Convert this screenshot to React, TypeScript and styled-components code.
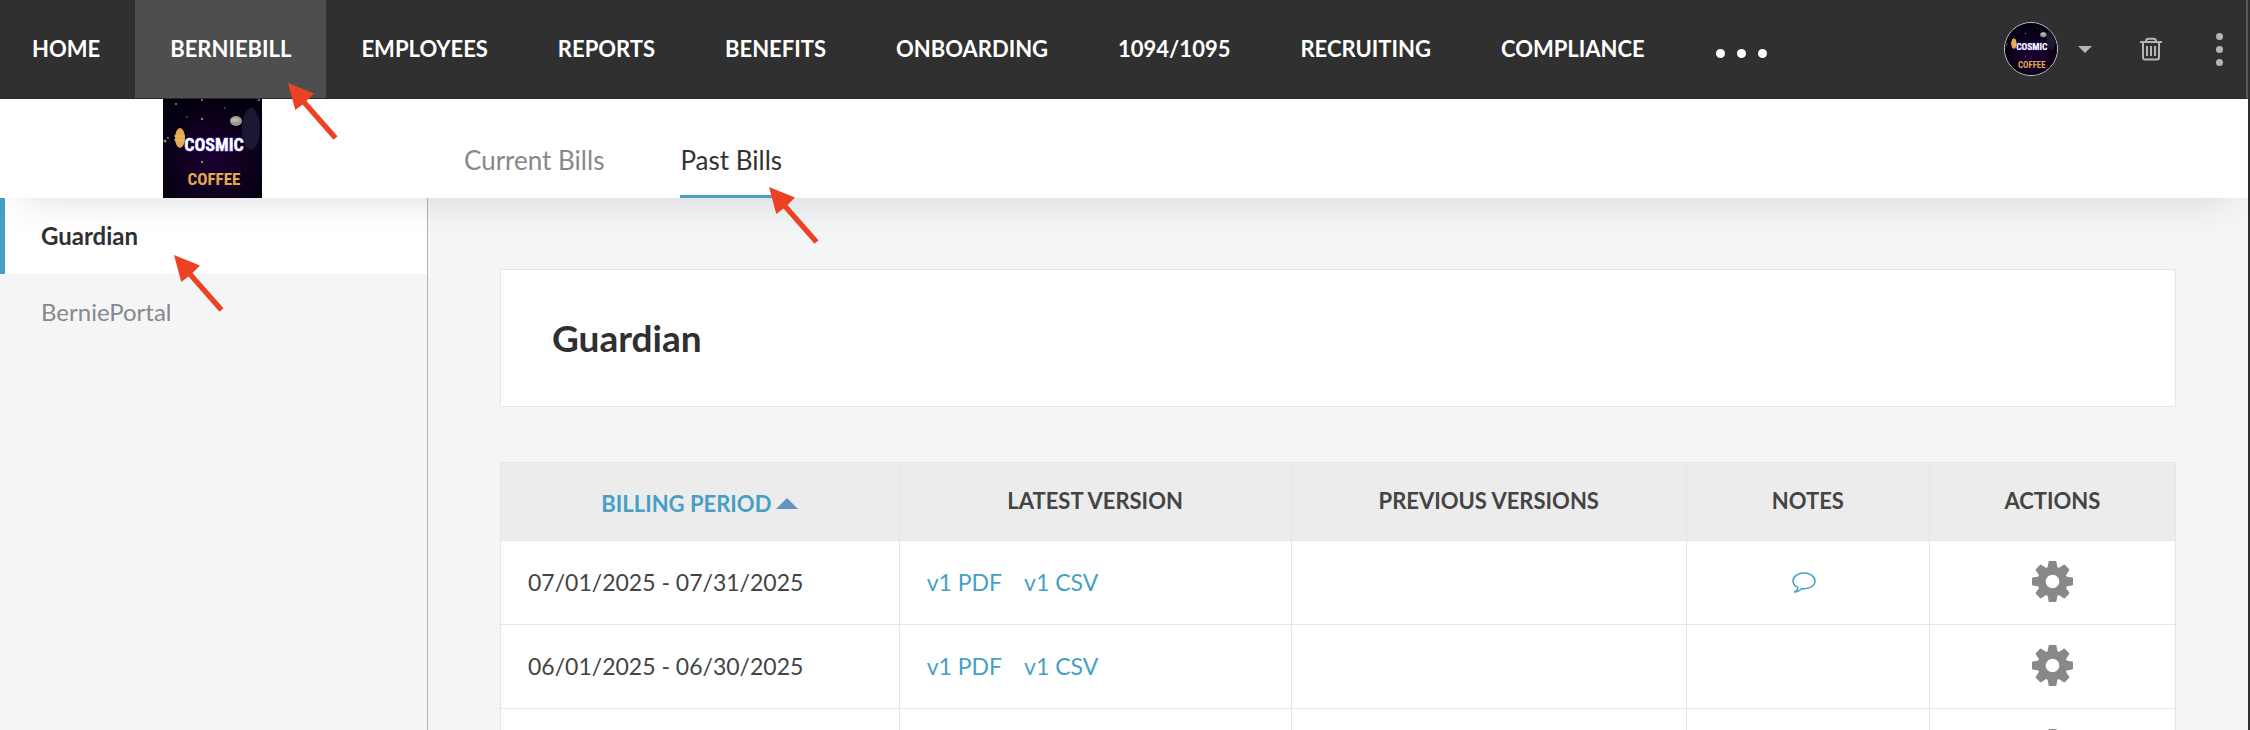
import React from "react";
import styled, { createGlobalStyle } from "styled-components";

const blue = "#469fc5";
const line = "#e4e5e7";

const GlobalStyle = createGlobalStyle`
  * { box-sizing: border-box; }
  html, body { margin: 0; height: 100%; overflow: hidden; }
  #root { height: 100%; }
  body {
    background: #f4f5f7;
    color: #444;
    font-family: Lato, "Liberation Sans", sans-serif;
    font-size: 24px;
    line-height: 28px;
  }
  a { text-decoration: none; }
  button { border: 0; padding: 0; background: none; cursor: pointer; font: inherit; }
`;

const Page = styled.div`
  display: flex;
  flex-direction: column;
  height: 100%;
  border-right: 2px solid #2f2f2f;
`;

const NavBar = styled.nav`
  position: relative;
  z-index: 3;
  display: flex;
  flex: none;
  height: 99px;
  background: #303030;
  border-bottom: 1px solid #282828;
  border-right: 2px solid #585858;
`;

const NavLink = styled.a<{ $active?: boolean }>`
  position: relative;
  display: flex;
  align-items: center;
  padding: 0 35px;
  color: #fff;
  background: ${(p) => (p.$active ? "#4e4e4e" : "transparent")};
  font-size: 22px;
  font-weight: 700;
  &:first-child { padding-left: 32px; }
`;

const MoreButton = styled.button`
  display: flex;
  align-items: center;
  gap: 12px;
  margin-left: 36px;
  padding-top: 8px;
`;

const MoreDot = styled.span`
  width: 9px;
  height: 9px;
  border-radius: 50%;
  background: #fff;
`;

const NavTools = styled.div`
  display: flex;
  align-items: center;
  margin-left: auto;
  padding-right: 23px;
  color: #b5b5b5;
`;

const AccountButton = styled.button`
  display: flex;
  align-items: center;
  gap: 20px;
  margin-right: 48px;
  color: inherit;
`;

const Avatar = styled.span`
  display: block;
  width: 54px;
  height: 54px;
  overflow: hidden;
  border: 1px solid #c9c9c9;
  border-radius: 50%;
`;

const IconButton = styled.button`
  display: flex;
  color: inherit;
`;

const KebabButton = styled(IconButton)`
  flex-direction: column;
  gap: 6px;
  margin-left: 54px;
`;

const KebabDot = styled.span`
  width: 7px;
  height: 7px;
  border-radius: 50%;
  background: #b5b5b5;
`;

const SubHeader = styled.header`
  position: relative;
  z-index: 2;
  display: flex;
  flex: none;
  height: 99px;
  background: #fff;
  box-shadow: 0 20px 40px -20px rgba(0, 0, 0, 0.14);
`;

const Brand = styled.div`
  display: flex;
  justify-content: center;
  width: 425px;
`;

const Tabs = styled.div`
  display: flex;
  gap: 76px;
  margin-left: 39px;
`;

const Tab = styled.a<{ $active?: boolean }>`
  position: relative;
  padding-top: 47px;
  color: ${(p) => (p.$active ? "#333" : "#888")};
  border-bottom: 3px solid ${(p) => (p.$active ? blue : "transparent")};
  font-size: 26px;
`;

const Body = styled.div`
  display: flex;
  flex: 1;
  min-height: 0;
`;

const Sidebar = styled.aside`
  display: flex;
  flex-direction: column;
  flex: none;
  width: 428px;
  border-right: 1px solid #b4b5b7;
`;

const SideLink = styled.a<{ $active?: boolean }>`
  position: relative;
  padding: 24px 36px;
  color: ${(p) => (p.$active ? "#303030" : "#888")};
  background: ${(p) => (p.$active ? "#fff" : "transparent")};
  border-left: 5px solid ${(p) => (p.$active ? blue : "transparent")};
  font-weight: ${(p) => (p.$active ? 700 : 400)};
`;

const Main = styled.main`
  flex: 1;
  min-width: 0;
  overflow: hidden;
  padding: 71px 72px 0;
`;

const TitleCard = styled.section`
  padding: 48px 51px;
  background: #fff;
  border: 1px solid ${line};
`;

const Title = styled.h1`
  margin: 0;
  color: #303030;
  font-size: 37px;
  font-weight: 700;
  line-height: 40px;
`;

const BillTable = styled.table`
  width: 100%;
  margin-top: 55px;
  border-collapse: collapse;
  table-layout: fixed;
  background: #fff;
`;

const HeadCell = styled.th<{ $share: number }>`
  width: ${(p) => p.$share}%;
  height: 78px;
  padding: 0 0 2px;
  background: #ececec;
  border: 1px solid #e5e6e7;
  font-size: 22px;
  font-weight: 700;
`;

const SortButton = styled.button`
  display: inline-flex;
  align-items: center;
  gap: 5px;
  padding-top: 6px;
  color: ${blue};
`;

const Cell = styled.td<{ $center?: boolean }>`
  height: 84px;
  padding: 0 27px 2px;
  border: 1px solid ${line};
  font-size: 23px;
  text-align: ${(p) => (p.$center ? "center" : "left")};
`;

const Versions = styled.div`
  display: flex;
  gap: 22px;
`;

const VersionLink = styled.a`
  color: ${blue};
`;

const NoteButton = styled.button`
  display: block;
  margin: 2px auto 0;
  padding-right: 8px;
  color: ${blue};
`;

const GearButton = styled.button`
  display: block;
  margin: 0 auto;
  color: #888;
`;

const Glyph = styled.svg`
  display: block;
`;

const Pointer = styled.svg<{ $left: number; $top: number }>`
  position: absolute;
  z-index: 5;
  left: ${(p) => p.$left}px;
  top: ${(p) => p.$top}px;
  width: 50px;
  height: 58px;
  pointer-events: none;
`;

const Arrow = ({ left, top }: { left: number; top: number }) => (
  <Pointer $left={left} $top={top} viewBox="0 0 50 58" aria-hidden="true">
    <path d="M0 0 26 10.500 18.500 18 49.500 53.300 45.500 56.800 14.500 21.500 7.300 27Z" fill="#ed4124" />
  </Pointer>
);

const Logo = ({ size, id }: { size: number; id: string }) => (
  <Glyph width={size} height={size} viewBox="0 0 99 99" role="img" aria-label="Cosmic Coffee">
    <defs>
      <radialGradient id={id} cx="50%" cy="62%" r="60%">
        <stop offset="0" stopColor="#1c0033" />
        <stop offset="1" stopColor="#04000f" />
      </radialGradient>
    </defs>
    <rect width="99" height="99" fill={`url(#${id})`} />
    <ellipse cx="88" cy="30" rx="9" ry="21" fill="#1c1733" />
    <ellipse cx="73" cy="22" rx="6" ry="5" fill="#9a9a94" />
    <ellipse cx="72" cy="21" rx="4" ry="2" fill="#b9b8a6" />
    <g fill="#8d8c6a">
      <circle cx="13" cy="5" r="1" />
      <circle cx="39" cy="1" r="1" />
      <circle cx="39" cy="20" r="1.200" />
      <circle cx="39" cy="63" r="1.200" />
      <circle cx="2" cy="42" r="1.500" />
      <circle cx="5" cy="39" r="1" />
      <circle cx="24" cy="18" r="1" opacity="0.5" />
      <circle cx="62" cy="9" r="1" opacity="0.5" />
      <circle cx="96" cy="1" r="1" />
    </g>
    <ellipse cx="17" cy="39" rx="5" ry="10" fill="#e8a84c" />
    <path d="M11 37h11M11 41h11" stroke="#e3c95c" />
    <g fontFamily="'Liberation Sans Narrow', 'Roboto Condensed', Roboto, sans-serif" fontWeight="700" textAnchor="middle">
      <text x="51" y="52" fontSize="18" fill="#fff" stroke="#6a5ed6" strokeWidth="1" paintOrder="stroke">COSMIC</text>
      <text x="51" y="86" fontSize="17" fill="#e3a94f">COFFEE</text>
    </g>
  </Glyph>
);

const TrashIcon = () => (
  <Glyph width="22" height="24" viewBox="0 0 22 24" fill="none" stroke="currentColor" strokeWidth="2" aria-hidden="true">
    <path d="M0 5H22M6 5V4.200a2.500 2.500 0 0 1 2.500-2.500h5A2.500 2.500 0 0 1 16 4.200V5M3 5v15.300a2.200 2.200 0 0 0 2.200 2.200h11.600a2.200 2.200 0 0 0 2.200-2.200V5M7 9v10M11 9v10M15 9v10" />
  </Glyph>
);

const GearIcon = () => (
  <Glyph width="41" height="41" viewBox="-20 -20 40 40" fill="currentColor" aria-hidden="true">
    <circle r="10.500" fill="none" stroke="currentColor" strokeWidth="7.600" />
    {[0, 45, 90, 135, 180, 225, 270, 315].map((angle) => (
      <path key={angle} d="M-5.800-12.500-4.700-14.500-3.800-19.300Q-3.600-20-3-20H3Q3.600-20 3.800-19.300L4.700-14.500 5.800-12.500Z" transform={`rotate(${angle})`} />
    ))}
  </Glyph>
);

const CommentIcon = () => (
  <Glyph width="24" height="21" viewBox="0 0 24 21" fill="none" stroke="currentColor" strokeWidth="1.500" strokeLinejoin="round" aria-hidden="true">
    <path d="M12 1C5.900 1 1 4.500 1 8.900c0 2.700 1.900 5.100 4.900 6.500C5.900 17.300 4.500 19 2.500 20 5.500 20 8 18.500 9.500 16.600c.8.1 1.600.2 2.500.2 6.100 0 11-3.500 11-7.900S18.100 1 12 1Z" />
  </Glyph>
);

const navItems = [
  "HOME", "BERNIEBILL", "EMPLOYEES", "REPORTS", "BENEFITS",
  "ONBOARDING", "1094/1095", "RECRUITING", "COMPLIANCE",
];

const bills = [
  { period: "07/01/2025 - 07/31/2025", versions: ["v1 PDF", "v1 CSV"], note: true },
  { period: "06/01/2025 - 06/30/2025", versions: ["v1 PDF", "v1 CSV"], note: false },
  { period: "", versions: [], note: false },
];

export default function App() {
  return (
    <>
      <GlobalStyle />
      <Page>
        <NavBar>
          {navItems.map((name) => (
            <NavLink key={name} href="#" $active={name === "BERNIEBILL"}>
              {name}
              {name === "BERNIEBILL" && <Arrow left={153} top={83} />}
            </NavLink>
          ))}
          <MoreButton aria-label="More">
            <MoreDot /><MoreDot /><MoreDot />
          </MoreButton>
          <NavTools>
            <AccountButton aria-label="Account">
              <Avatar><Logo size={52} id="avatar" /></Avatar>
              <Glyph width="14" height="7" viewBox="0 0 14 7" aria-hidden="true"><path d="M0 0h14L7 7Z" fill="currentColor" /></Glyph>
            </AccountButton>
            <IconButton aria-label="Trash"><TrashIcon /></IconButton>
            <KebabButton aria-label="Menu"><KebabDot /><KebabDot /><KebabDot /></KebabButton>
          </NavTools>
        </NavBar>
        <SubHeader>
          <Brand><Logo size={99} id="brand" /></Brand>
          <Tabs>
            <Tab href="#">Current Bills</Tab>
            <Tab href="#" $active>Past Bills<Arrow left={89} top={88} /></Tab>
          </Tabs>
        </SubHeader>
        <Body>
          <Sidebar>
            <SideLink href="#" $active>Guardian<Arrow left={169} top={57} /></SideLink>
            <SideLink href="#">BerniePortal</SideLink>
          </Sidebar>
          <Main>
            <TitleCard><Title>Guardian</Title></TitleCard>
            <BillTable>
              <thead>
                <tr>
                  <HeadCell $share={23.8}>
                    <SortButton>
                      BILLING PERIOD
                      <Glyph width="22" height="11" viewBox="0 0 22 11" aria-hidden="true"><path d="M0 11 11 0 22 11Z" fill="#6593bf" /></Glyph>
                    </SortButton>
                  </HeadCell>
                  <HeadCell $share={23.4}>LATEST VERSION</HeadCell>
                  <HeadCell $share={23.6}>PREVIOUS VERSIONS</HeadCell>
                  <HeadCell $share={14.5}>NOTES</HeadCell>
                  <HeadCell $share={14.7}>ACTIONS</HeadCell>
                </tr>
              </thead>
              <tbody>
                {bills.map((bill, index) => (
                  <tr key={index}>
                    <Cell>{bill.period}</Cell>
                    <Cell>
                      <Versions>
                        {bill.versions.map((version) => (
                          <VersionLink key={version} href="#">{version}</VersionLink>
                        ))}
                      </Versions>
                    </Cell>
                    <Cell />
                    <Cell $center>
                      {bill.note && <NoteButton aria-label="Note"><CommentIcon /></NoteButton>}
                    </Cell>
                    <Cell $center><GearButton aria-label="Actions"><GearIcon /></GearButton></Cell>
                  </tr>
                ))}
              </tbody>
            </BillTable>
          </Main>
        </Body>
      </Page>
    </>
  );
}
